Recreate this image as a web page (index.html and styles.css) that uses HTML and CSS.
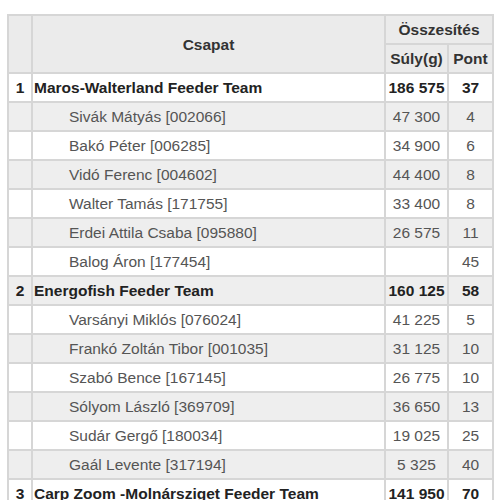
FILE: index.html
```html
<!DOCTYPE html>
<html>
<head>
<meta charset="utf-8">
<link rel="stylesheet" href="styles.css">
</head>
<body>
<table class="results">
  <colgroup>
    <col class="c-rank">
    <col class="c-name">
    <col class="c-weight">
    <col class="c-pont">
  </colgroup>
  <thead>
    <tr>
      <th rowspan="2"></th>
      <th rowspan="2">Csapat</th>
      <th colspan="2">Összesítés</th>
    </tr>
    <tr>
      <th>Súly(g)</th>
      <th>Pont</th>
    </tr>
  </thead>
  <tbody>
    <tr class="team"><td class="rank">1</td><td class="tname">Maros-Walterland Feeder Team</td><td class="num">186 575</td><td class="num">37</td></tr>
    <tr class="player"><td></td><td class="pname">Sivák Mátyás [002066]</td><td class="num">47 300</td><td class="num">4</td></tr>
    <tr class="player"><td></td><td class="pname">Bakó Péter [006285]</td><td class="num">34 900</td><td class="num">6</td></tr>
    <tr class="player"><td></td><td class="pname">Vidó Ferenc [004602]</td><td class="num">44 400</td><td class="num">8</td></tr>
    <tr class="player"><td></td><td class="pname">Walter Tamás [171755]</td><td class="num">33 400</td><td class="num">8</td></tr>
    <tr class="player"><td></td><td class="pname">Erdei Attila Csaba [095880]</td><td class="num">26 575</td><td class="num">11</td></tr>
    <tr class="player"><td></td><td class="pname">Balog Áron [177454]</td><td class="num"></td><td class="num">45</td></tr>
    <tr class="team"><td class="rank">2</td><td class="tname">Energofish Feeder Team</td><td class="num">160 125</td><td class="num">58</td></tr>
    <tr class="player"><td></td><td class="pname">Varsányi Miklós [076024]</td><td class="num">41 225</td><td class="num">5</td></tr>
    <tr class="player"><td></td><td class="pname">Frankó Zoltán Tibor [001035]</td><td class="num">31 125</td><td class="num">10</td></tr>
    <tr class="player"><td></td><td class="pname">Szabó Bence [167145]</td><td class="num">26 775</td><td class="num">10</td></tr>
    <tr class="player"><td></td><td class="pname">Sólyom László [369709]</td><td class="num">36 650</td><td class="num">13</td></tr>
    <tr class="player"><td></td><td class="pname">Sudár Gergő [180034]</td><td class="num">19 025</td><td class="num">25</td></tr>
    <tr class="player"><td></td><td class="pname">Gaál Levente [317194]</td><td class="num">5 325</td><td class="num">40</td></tr>
    <tr class="team"><td class="rank">3</td><td class="tname">Carp Zoom -Molnársziget Feeder Team</td><td class="num">141 950</td><td class="num">70</td></tr>
  </tbody>
</table>
</body>
</html>
```
FILE: styles.css
```css
html, body {
  margin: 0;
  padding: 0;
  background: #ffffff;
}
body {
  padding: 14px 0 0 7px;
  font-family: "Liberation Sans", Arial, sans-serif;
  font-size: 15.5px;
  color: #555555;
}
.results {
  border-collapse: collapse;
  table-layout: fixed;
  width: 485px;
}
.c-rank { width: 24px; }
.c-name { width: 353px; }
.c-weight { width: 63px; }
.c-pont { width: 45px; }
.results th,
.results td {
  border: 2px solid #d6d6d6;
  padding: 5px 1px;
  line-height: 17px;
  white-space: nowrap;
  overflow: hidden;
}
.results th {
  background: #ebebeb;
  color: #333333;
  font-weight: bold;
  text-align: center;
}
.results tbody tr:nth-child(even) td {
  background: #eeeeee;
}
.team td {
  color: #222222;
  font-weight: bold;
}
.rank {
  text-align: center;
}
.tname {
  text-align: left;
}
.pname {
  text-align: left;
  padding-left: 36px !important;
}
.num {
  text-align: center;
}
```
